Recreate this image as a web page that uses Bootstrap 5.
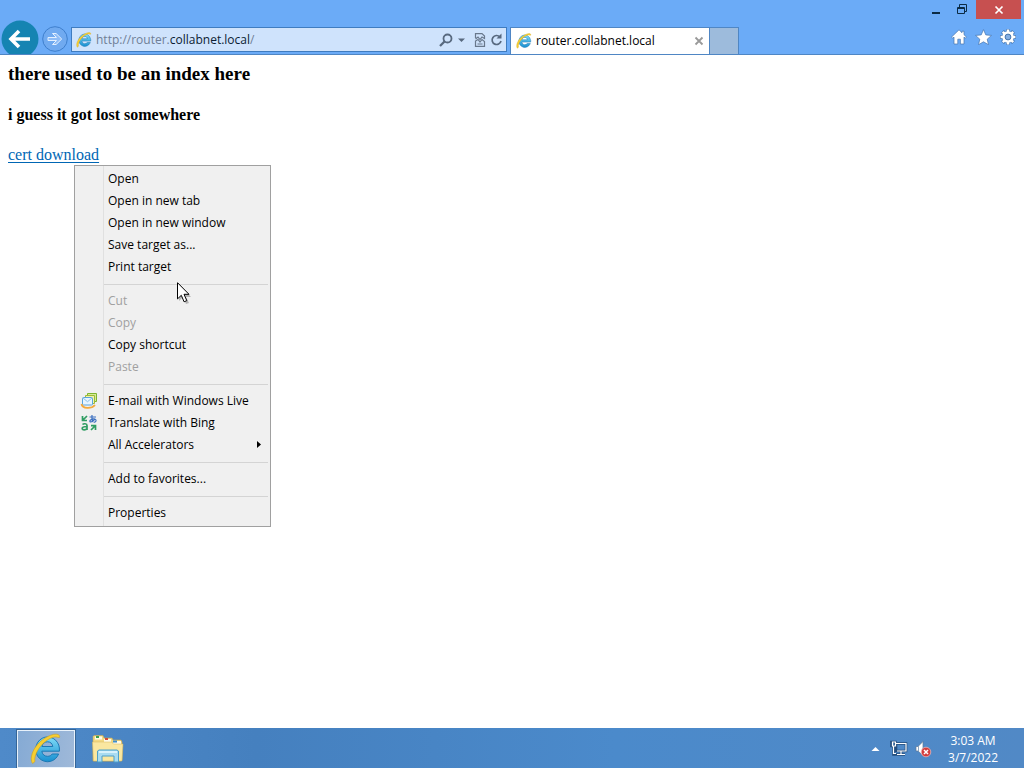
<!DOCTYPE html>
<html lang="en">
<head>
<meta charset="utf-8">
<meta name="viewport" content="width=device-width, initial-scale=1">
<title>router.collabnet.local</title>
<link href="https://cdn.jsdelivr.net/npm/bootstrap@5.3.0/dist/css/bootstrap.min.css" rel="stylesheet">
<style>
  body { font: 12px/16px "Open Sans", "Noto Sans", sans-serif; color: #000; background: #fff; }
  button { border: 0; padding: 0; background: none; color: inherit; }
  svg { display: block; }
  .browser-head { background: #6babf7; border-bottom: 1px solid #4f86c4; height: 55px; }
  .caption-row { height: 20px; }
  .caption-btn { width: 26px; height: 19px; display: grid; place-items: center; }
  .caption-close { width: 45px; background: #c75050; margin-right: 3px; }
  .tool-row { height: 34px; }
  .address { flex: 0 1 436px; min-width: 0; height: 25px; background: #cfe3fc; border: 1px solid #3f7cc0; margin: 0 0 2px 2px; padding: 0 3px 0 4px; }
  .address-field { position: relative; height: 23px; }
  .address-field input { width: 100%; height: 23px; border: 0; padding: 0; background: none; color: transparent; caret-color: #000; }
  .address-field label { position: absolute; inset: 0; line-height: 23px; color: #6f7f96; white-space: nowrap; }
  .address-field b { font-weight: 400; color: #0b1c33; }
  .page-tab { flex: 0 1 200px; min-width: 0; height: 27px; background: #fff; border: 1px solid #4f86c4; border-bottom: 0; margin-left: 3px; padding: 0 5px; }
  .tab-new { width: 29px; height: 27px; background: #9dbbdc; border: 1px solid #4f86c4; border-left: 0; border-bottom: 0; }
  .page { font-family: "Liberation Serif", serif; padding: 8px; }
  .page h3 { font-size: 19px; line-height: 22px; font-weight: 700; margin: 0 0 21px; }
  .page h4 { font-size: 16px; line-height: 18px; font-weight: 700; margin: 0 0 22px; }
  .page p { font-size: 16px; line-height: 18px; margin: 0; }
  .page p a { color: #0066b4; text-underline-offset: 2px; }
  .context { display: block; left: 74px; top: 110px; width: 197px; padding: 2px; border: 1px solid #a0a0a0; border-radius: 0; background: #f0f0f0 linear-gradient(#e0e0e0, #e0e0e0) 28px 0 / 1px 100% no-repeat; font: 12px/22px "Open Sans", "Noto Sans", sans-serif; --bs-dropdown-min-width: 0; }
  .context .dropdown-item { padding: 0 6px 0 31px; line-height: 22px; color: #000; position: relative; }
  .context .dropdown-item:disabled { color: #a0a0a0; }
  .context hr { margin: 6px 0 5px 27px; border-top: 1px solid #d4d4d4; opacity: 1; }
  .context .lead-icon { position: absolute; left: 3px; top: 2px; }
  .pointer { position: absolute; left: 177px; top: 227px; z-index: 1100; pointer-events: none; }
  .taskbar { height: 40px; background: linear-gradient(90deg, #4f8ac9, #4580bf 25%, #4b8acb 60%, #5189c6); padding: 1px 26px 0 17px; }
  .task-active { width: 58px; height: 38px; background: linear-gradient(100deg, #85aad4, #9fb9d9); border: 1px solid #e8f2fb; outline: 1px solid #356597; display: grid; place-items: center; }
  .clock { color: #fff; line-height: 17px; text-align: center; }
</style>
</head>
<body class="d-flex flex-column min-vh-100">
<svg width="0" height="0" class="position-absolute" aria-hidden="true">
  <defs>
    <linearGradient id="blue" x1="0" y1="0" x2="0" y2="1"><stop offset="0" stop-color="#7fdcf8"/><stop offset="1" stop-color="#188fd0"/></linearGradient>
    <symbol id="ie" viewBox="0 0 32 32">
      <path d="M28.600 21A11.900 12.400 0 1 1 29.400 15L29.400 18.200H11.800C12.300 21.500 14.500 23.300 17.500 23.300C19.700 23.300 21.200 22.500 22.200 21ZM11.900 13.500H22.800C22.300 10.500 20.400 8.800 17.500 8.800C14.600 8.800 12.500 10.500 11.900 13.500Z" fill="url(#blue)" stroke="#1b79b5" stroke-width="1"/>
      <path d="M29.500 4.500C30.500 1 26 .2 20.500 2.300C13 5.200 6 11.500 3 18.500C.8 23.500.8 28 2.600 30.500L5 28.500C4 24.500 6.500 17.500 12.300 11.300C18 5.500 24.500 2.800 27.500 4.300Z" fill="#f8cf32" stroke="#cda01f" stroke-width=".6"/>
    </symbol>
  </defs>
</svg>

<header class="browser-head">
  <div class="caption-row d-flex justify-content-end align-items-start">
    <button class="caption-btn" aria-label="Minimize"><svg width="12" height="12"><path d="M1 8h8v2H1z" fill="#0b2b45"/></svg></button>
    <button class="caption-btn" aria-label="Restore"><svg width="12" height="12" fill="none" stroke="#0b2b45"><path d="M.5 3.500h7v6h-7zM0 4.500h8M2.500 3V.5h7v7H8"/></svg></button>
    <button class="caption-btn caption-close" aria-label="Close"><svg width="10" height="10"><path d="M1.500 1.500l7 7M8.500 1.500l-7 7" stroke="#fff" stroke-width="1.700"/></svg></button>
  </div>
  <div class="tool-row d-flex align-items-end">
    <button aria-label="Back"><svg width="40" height="34"><circle cx="20" cy="19" r="18.500" fill="#1584b2"/><path d="M30 19H12M19 11l-8 8 8 8" fill="none" stroke="#fff" stroke-width="3.600"/></svg></button>
    <button aria-label="Forward"><svg width="29" height="34"><circle cx="15" cy="19" r="12.300" fill="#70aaf0" stroke="#3e7fcd"/><path d="M8 17.500h8.500l-4-4h3.600l5.600 5.500-5.600 5.500h-3.600l4-4H8z" fill="#8fbdf7" stroke="#e3f0ff"/></svg></button>
    <div class="address d-flex align-items-center gap-1">
      <svg width="16" height="16" class="flex-shrink-0"><use href="#ie"/></svg>
      <div class="address-field flex-grow-1"><label for="url">http://router.<b>collabnet.local</b>/</label><input id="url" type="text"></div>
      <div class="d-flex align-items-center flex-shrink-0">
        <button aria-label="Search"><svg width="16" height="16" fill="none" stroke="#58697f"><circle cx="9.500" cy="6.500" r="4" stroke-width="1.800"/><path d="M6.500 9.500L2 14" stroke-width="2.300"/></svg></button>
        <button class="ms-1" aria-label="Show address list"><svg width="8" height="16"><path d="M0 6.500h7L3.500 10z" fill="#58697f"/></svg></button>
        <button class="ms-2" aria-label="Compatibility View"><svg width="12" height="16" fill="none" stroke="#69788c" stroke-width="1.200"><path d="M1.500 6V1.600H8L10.500 4v2.500L8 5 6 7.500 4 5 1.500 7M1.500 14.400V9L4 7.500l2 2.500 2-2.500 2.500 2v4.900zM3.500 12h5"/></svg></button>
        <button class="ms-1" aria-label="Refresh"><svg width="13" height="16"><path d="M9.800 4.800A4.500 4.500 0 1 0 11 9" fill="none" stroke="#58697f" stroke-width="1.700"/><path d="M6.500 6.500h5v-5z" fill="#58697f"/></svg></button>
      </div>
    </div>
    <div class="page-tab d-flex align-items-center">
      <svg width="16" height="16" class="flex-shrink-0"><use href="#ie"/></svg>
      <span class="flex-grow-1 text-truncate ms-1">router.collabnet.local</span>
      <button aria-label="Close tab"><svg width="10" height="10"><path d="M1.500 1.500l7 7M8.500 1.500l-7 7" stroke="#999" stroke-width="1.800"/></svg></button>
    </div>
    <button class="tab-new" aria-label="New tab"></button>
    <div class="d-flex align-items-center align-self-center ms-auto gap-2 pe-2">
      <button aria-label="Home"><svg width="16" height="16"><path d="M8 .8L.6 8l1.200 1.200L3 8.100V15h3.800v-4.800h2.600V15H13V8.100l1.200 1.100L15.400 8 13 5.700V2.200h-2v1.500z" fill="#fff" stroke="#4574ad" stroke-width=".7"/></svg></button>
      <button aria-label="Favorites"><svg width="17" height="16"><path d="M8.500.6l2.300 5.300 5.700.5-4.300 3.800 1.300 5.500-5-2.900-5 2.900 1.300-5.500L.5 6.400l5.700-.5z" fill="#fff" stroke="#4574ad" stroke-width=".7"/></svg></button>
      <button aria-label="Tools"><svg width="16" height="16"><g stroke="#4574ad" stroke-width="4"><path d="M8 .2v15.600M.2 8h15.600M2.500 2.500l11 11M13.500 2.500l-11 11"/></g><circle cx="8" cy="8" r="5.700" fill="#fff"/><g stroke="#fff" stroke-width="2.600"><path d="M8 .6v14.800M.6 8h14.800M2.800 2.800l10.400 10.400M13.200 2.800L2.800 13.200"/></g><circle cx="8" cy="8" r="2.900" fill="#83aee2" stroke="#4574ad"/></svg></button>
    </div>
  </div>
</header>

<main class="page flex-grow-1 position-relative">
  <h3>there used to be an index here</h3>
  <h4>i guess it got lost somewhere</h4>
  <p><a href="#cert">cert download</a></p>

  <div class="dropdown-menu context show">
    <button class="dropdown-item">Open</button>
    <button class="dropdown-item">Open in new tab</button>
    <button class="dropdown-item">Open in new window</button>
    <button class="dropdown-item">Save target as...</button>
    <button class="dropdown-item">Print target</button>
    <hr>
    <button class="dropdown-item" disabled>Cut</button>
    <button class="dropdown-item" disabled>Copy</button>
    <button class="dropdown-item">Copy shortcut</button>
    <button class="dropdown-item" disabled>Paste</button>
    <hr>
    <button class="dropdown-item">
      <svg class="lead-icon" width="18" height="18"><path d="M7.500 1.500h9v8h-9z" fill="#d8ea9a" stroke="#7fb52f"/><path d="M5.500 3.500h9v8h-9z" fill="#f3f3a8" stroke="#9bb93a"/><rect x="2.500" y="5.500" width="10" height="7.500" rx="1" fill="#e6f4ff" stroke="#5aa4dc"/><path d="M3 6l4.500 3.700L12 6" fill="none" stroke="#8cc1e8"/><path d="M1.500 12c1 5 10 5 13.500 1" fill="none" stroke="#f3a93c" stroke-width="1.800"/></svg>E-mail with Windows Live</button>
    <button class="dropdown-item">
      <svg class="lead-icon" width="18" height="18" fill="none" stroke-width="1.200"><g stroke="#3b6fc0"><path d="M9.500 3h6.500M12 1c-.4 3 0 5 .8 7M15 4.500C14 7 11 8.500 10 7.700 9 6.500 12 4.500 14.500 5c2.500.6 2 3-.8 3.300"/></g><g stroke="#2f9d62"><path d="M7 2L3 6M2.500 2v4.500H7M2.500 10.500c1-1 4.500-1.300 4.500 1V16M7 12.500c-3 0-4.800.5-4.800 2 0 2 3.800 1.700 4.800 0" stroke-width="1.700"/><path d="M11 16l4-4M11 11.700h4.500V16" stroke-width="1.700"/></g></svg>Translate with Bing</button>
    <button class="dropdown-item d-flex align-items-center">All Accelerators<svg class="ms-auto" width="6" height="10"><path d="M1 1v7l4-3.500z" fill="#000"/></svg></button>
    <hr>
    <button class="dropdown-item">Add to favorites...</button>
    <hr>
    <button class="dropdown-item">Properties</button>
  </div>
  <svg class="pointer" width="15" height="23"><path d="M2 2v17l4-4 3 7 3-1-3-6h5z" fill="#000" opacity=".25"/><path d="M.5.700v16.200l3.800-3.600 2.800 6.500 2.700-1.200L7 12.300h5z" fill="#fff" stroke="#000"/></svg>
</main>

<footer class="taskbar d-flex align-items-center">
  <button class="task-active" aria-label="Internet Explorer"><svg width="32" height="32"><use href="#ie"/></svg></button>
  <button class="ms-3" aria-label="File Explorer"><svg width="34" height="30" viewBox="0 0 34 30"><path d="M2 5V2.500l1-1h9L13 4h8l1 2h8l1 2v18l-1 1H2z" fill="#f3d983" stroke="#c8a850" stroke-width=".6"/><path d="M4 2.500h7v3H4zM13 5h7v3h-7zM22 7h8v3h-8z" fill="#fffbe8"/><path d="M5 2h3v2H5z" fill="#3ba04b"/><path d="M14 4h3v2h-3z" fill="#d34b3a"/><path d="M22 6.500h4v2h-4z" fill="#3c8dcd"/><path d="M1.500 8h19l2 2H32l-1 17H2.500z" fill="#fae7a0" stroke="#d5b65e" stroke-width=".5"/><path d="M6.500 28V17l1.500-1h18l1.500 1v11h-4.500v-6h-12v6z" fill="#a9dcf1" stroke="#4d9fc8"/><path d="M8 18h18" stroke="#e8faff" stroke-width="1.500"/></svg></button>
  <div class="d-flex align-items-center ms-auto">
    <button aria-label="Show hidden icons"><svg width="9" height="6"><path d="M.5 5h8l-4-4z" fill="#fff"/></svg></button>
    <button class="ms-2" aria-label="Network"><svg width="22" height="18" fill="none"><path d="M8 3.500h10v7.500H8zM13 11v3.500M9 14.500h8M3.500 2h4v4h-4zM5.500 6v8.500H9" stroke="#244d7c" stroke-width="2.600"/><path d="M8 3.500h10v7.500H9M13 11v3.500M9 14.500h8M4.500 2h3v4h-3zM5.500 6v7.500H8" stroke="#fff" stroke-width="1.200"/></svg></button>
    <button class="ms-1" aria-label="Volume muted"><svg width="18" height="18"><path d="M2 6.500h2l5-5v14l-5-4.500H2z" fill="#fff" stroke="#5d7797" stroke-width=".7"/><path d="M4.500 6v5" stroke="#8ca4c0"/><circle cx="12" cy="12" r="4.800" fill="#d43d3d" stroke="#f2c2c2" stroke-width=".7"/><path d="M10 10l4 4M14 10l-4 4" stroke="#fff" stroke-width="1.500"/></svg></button>
    <div class="clock ms-3">3:03 AM<br>3/7/2022</div>
  </div>
</footer>
<script src="https://cdn.jsdelivr.net/npm/bootstrap@5.3.0/dist/js/bootstrap.bundle.min.js"></script>
</body>
</html>
